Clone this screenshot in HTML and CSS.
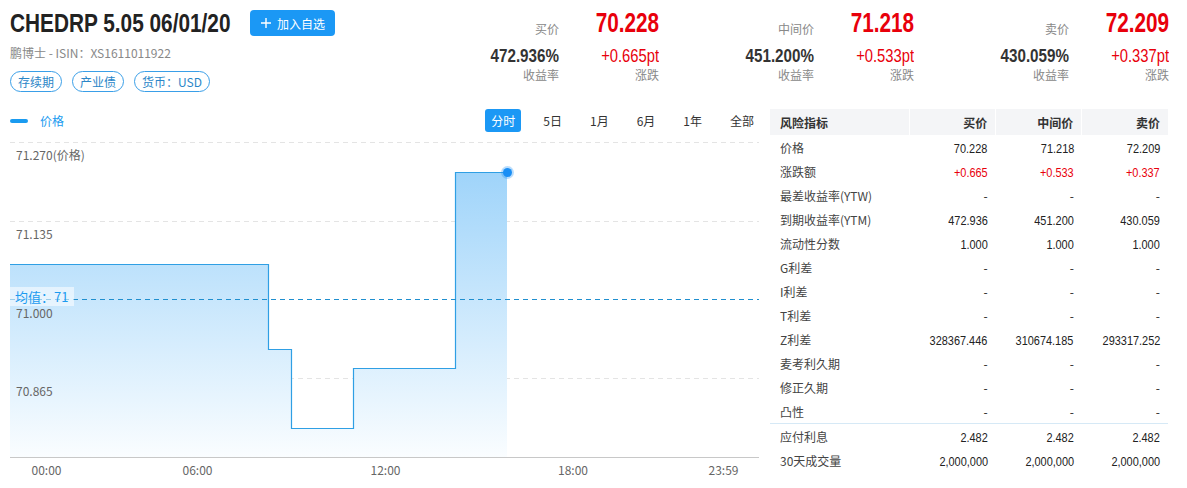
FILE: index.html
```html
<!DOCTYPE html>
<html lang="zh">
<head>
    <meta charset="UTF-8">
    <meta name="viewport" content="width=device-width, initial-scale=1.0">
    <title>CHEDRP 5.05 06/01/20</title>
    <link rel="stylesheet" href="styles.css">
</head>
<body>
    <header class="top">
        <div class="bond">
            <div class="bond-title">
                <h1>CHEDRP 5.05 06/01/20</h1>
                <button class="add-btn">
                    <svg width="12" height="12" viewBox="0 0 12 12"><path d="M6 1v10M1 6h10" stroke="#fff" stroke-width="1.4" fill="none"/></svg>
                    加入自选
                </button>
            </div>
            <div class="bond-sub">鹏博士 - ISIN：XS1611011922</div>
            <div class="tags">
                <span class="tag">存续期</span>
                <span class="tag">产业债</span>
                <span class="tag">货币：USD</span>
            </div>
        </div>
        <div class="quotes">
            <div class="quote">
                <span class="q-label">买价</span>
                <span class="q-price">70.228</span>
                <span class="q-yield">472.936%</span>
                <span class="q-chg">+0.665pt</span>
                <span class="q-cap">收益率</span>
                <span class="q-cap">涨跌</span>
            </div>
            <div class="quote">
                <span class="q-label">中间价</span>
                <span class="q-price">71.218</span>
                <span class="q-yield">451.200%</span>
                <span class="q-chg">+0.533pt</span>
                <span class="q-cap">收益率</span>
                <span class="q-cap">涨跌</span>
            </div>
            <div class="quote">
                <span class="q-label">卖价</span>
                <span class="q-price">72.209</span>
                <span class="q-yield">430.059%</span>
                <span class="q-chg">+0.337pt</span>
                <span class="q-cap">收益率</span>
                <span class="q-cap">涨跌</span>
            </div>
        </div>
    </header>

    <main class="content">
        <section class="chart">
            <div class="chart-bar">
                <div class="legend"><span class="legend-line"></span>价格</div>
                <div class="ranges">
                    <button class="range active">分时</button>
                    <button class="range">5日</button>
                    <button class="range">1月</button>
                    <button class="range">6月</button>
                    <button class="range">1年</button>
                    <button class="range">全部</button>
                </div>
            </div>
            <svg class="plot" width="770" height="350" viewBox="0 138 770 350">
                <defs>
                    <linearGradient id="area" x1="0" y1="172" x2="0" y2="457" gradientUnits="userSpaceOnUse">
                        <stop offset="0" stop-color="#9fd4fa"/>
                        <stop offset="1" stop-color="#fafdff"/>
                    </linearGradient>
                </defs>
                <g class="grid-lines">
                    <line x1="10" y1="142.5" x2="759" y2="142.5"/>
                    <line x1="10" y1="221.5" x2="759" y2="221.5"/>
                    <line x1="10" y1="378.5" x2="759" y2="378.5"/>
                </g>
                <line class="axis" x1="10" y1="457.5" x2="759" y2="457.5"/>
                <path class="area" d="M10 264 H268 V349 H291 V428 H353 V368 H455.5 V172 H507 V457 H10 Z"/>
                <path class="price-line" d="M10 264.5 H268.5 V349.5 H291.5 V428.5 H353.5 V368.5 H455.5 V172.5 H507"/>
                <line class="mean-line" x1="10" y1="299.5" x2="759" y2="299.5"/>
                <g class="y-labels">
                    <text x="16" y="160">71.270(价格)</text>
                    <text x="16" y="239">71.135</text>
                    <text x="16" y="318">71.000</text>
                    <text x="16" y="396">70.865</text>
                </g>
                <rect class="mean-box" x="10" y="287" width="64" height="19"/>
                <text class="mean-text" x="15" y="302">均值：71</text>
                <g class="x-labels">
                    <text x="46.5" y="475">00:00</text>
                    <text x="197.5" y="475">06:00</text>
                    <text x="385.5" y="475">12:00</text>
                    <text x="573" y="475">18:00</text>
                    <text x="723.5" y="475">23:59</text>
                </g>
                <circle cx="507.5" cy="172.5" r="6.5" fill="#1a8ff5" fill-opacity="0.3"/>
                <circle cx="507.5" cy="172.5" r="4.5" fill="#1a8ff5"/>
            </svg>
        </section>

        <section class="risk">
            <table class="risk-table">
                <thead>
                    <tr><th>风险指标</th><th>买价</th><th>中间价</th><th>卖价</th></tr>
                </thead>
                <tbody>
                    <tr><td>价格</td><td class="num"><span class="n">70.228</span></td><td class="num"><span class="n">71.218</span></td><td class="num"><span class="n">72.209</span></td></tr>
                    <tr><td>涨跌额</td><td class="num up"><span class="n">+0.665</span></td><td class="num up"><span class="n">+0.533</span></td><td class="num up"><span class="n">+0.337</span></td></tr>
                    <tr><td>最差收益率(YTW)</td><td class="num">-</td><td class="num">-</td><td class="num">-</td></tr>
                    <tr><td>到期收益率(YTM)</td><td class="num"><span class="n">472.936</span></td><td class="num"><span class="n">451.200</span></td><td class="num"><span class="n">430.059</span></td></tr>
                    <tr><td>流动性分数</td><td class="num"><span class="n">1.000</span></td><td class="num"><span class="n">1.000</span></td><td class="num"><span class="n">1.000</span></td></tr>
                    <tr><td>G利差</td><td class="num">-</td><td class="num">-</td><td class="num">-</td></tr>
                    <tr><td>I利差</td><td class="num">-</td><td class="num">-</td><td class="num">-</td></tr>
                    <tr><td>T利差</td><td class="num">-</td><td class="num">-</td><td class="num">-</td></tr>
                    <tr><td>Z利差</td><td class="num"><span class="n">328367.446</span></td><td class="num"><span class="n">310674.185</span></td><td class="num"><span class="n">293317.252</span></td></tr>
                    <tr><td>麦考利久期</td><td class="num">-</td><td class="num">-</td><td class="num">-</td></tr>
                    <tr><td>修正久期</td><td class="num">-</td><td class="num">-</td><td class="num">-</td></tr>
                    <tr><td>凸性</td><td class="num">-</td><td class="num">-</td><td class="num">-</td></tr>
                    <tr class="split"><td>应付利息</td><td class="num"><span class="n">2.482</span></td><td class="num"><span class="n">2.482</span></td><td class="num"><span class="n">2.482</span></td></tr>
                    <tr><td>30天成交量</td><td class="num"><span class="n">2,000,000</span></td><td class="num"><span class="n">2,000,000</span></td><td class="num"><span class="n">2,000,000</span></td></tr>
                </tbody>
            </table>
        </section>
    </main>
</body>
</html>
```

FILE: styles.css
```css
body {
    margin: 0;
    font-family: "Noto Sans CJK SC", "Noto Sans", sans-serif;
    font-size: 12px;
    color: #333;
    background-color: #fff;
}
.top {
    display: flex;
    height: 100px;
}
.bond {
    box-sizing: border-box;
    width: 404px;
    padding: 8px 0 0 10px;
}
.bond-title {
    display: flex;
    align-items: center;
}
/* narrow figures: Arial-width font squeezed to the condensed look */
h1 {
    width: 225px;
    margin: 0;
    font-family: "Liberation Sans", Arial, sans-serif;
    font-size: 26px;
    font-weight: bold;
    line-height: 30px;
    white-space: nowrap;
    color: #222;
    transform: scaleX(0.8);
    transform-origin: left center;
}
.add-btn {
    display: flex;
    align-items: center;
    gap: 5px;
    height: 26px;
    margin-left: 15px;
    padding: 0 10px;
    border: none;
    border-radius: 4px;
    background-color: #1b98f5;
    color: #fff;
    font-family: inherit;
    font-size: 12px;
}
.bond-sub {
    margin-top: 7px;
    line-height: 16px;
    color: #888;
}
.tags {
    display: flex;
    gap: 10px;
    margin-top: 10px;
}
.tag {
    box-sizing: border-box;
    height: 21px;
    padding: 0 7px;
    border: 1px solid #3a9fe8;
    border-radius: 11px;
    line-height: 19px;
    color: #2a86c8;
}
.quotes {
    display: flex;
    padding-top: 5px;
}
.quote {
    display: grid;
    grid-template-columns: 155px 100px;
    grid-template-rows: 36px 27px 18px;
    text-align: right;
}
.q-label, .q-cap {
    color: #888;
    font-size: 12px;
}
.q-label {
    align-self: end;
    line-height: 16px;
    padding-bottom: 4px;
}
.q-cap {
    line-height: 14px;
}
.q-price, .q-yield, .q-chg {
    font-family: "Liberation Sans", Arial, sans-serif;
    white-space: nowrap;
    transform-origin: right center;
}
.q-price {
    font-size: 28px;
    font-weight: bold;
    line-height: 36px;
    color: #e8000b;
    transform: scaleX(0.74);
}
.q-yield, .q-chg {
    line-height: 24px;
    padding-top: 3px;
}
.q-yield {
    font-size: 19px;
    font-weight: bold;
    color: #333;
    transform: scaleX(0.8);
}
.q-chg {
    font-size: 18px;
    color: #e8000b;
    transform: scaleX(0.82);
}

.content {
    display: flex;
}
.chart {
    width: 770px;
}
.chart-bar {
    display: flex;
    align-items: center;
    height: 23px;
    margin: 9px 0 6px;
    padding-right: 10px;
}
.legend {
    display: flex;
    align-items: center;
    color: #1a9bf0;
}
.legend-line {
    width: 18px;
    height: 4px;
    margin: 0 12px 0 10px;
    border-radius: 2px;
    background-color: #1a9bf0;
}
.ranges {
    display: flex;
    gap: 16px;
    margin-left: auto;
}
.range {
    height: 23px;
    padding: 0 6px;
    border: none;
    border-radius: 3px;
    background: none;
    font-family: inherit;
    font-size: 12px;
    color: #333;
}
.range.active {
    background-color: #1b98f5;
    color: #fff;
}
.plot {
    display: block;
    font-family: "Noto Sans CJK SC", "Noto Sans", sans-serif;
    font-size: 12px;
}
.grid-lines line {
    stroke: #e4e4e4;
    stroke-dasharray: 5 4;
}
.axis {
    stroke: #c8c8c8;
}
.area {
    fill: url(#area);
}
.price-line {
    fill: none;
    stroke: #2f9fe4;
    stroke-width: 1.2;
}
.mean-line {
    stroke: #1f8fcf;
    stroke-dasharray: 5 4;
}
.y-labels text, .x-labels text {
    fill: #666;
}
.x-labels text {
    text-anchor: middle;
}
.mean-box {
    fill: #fff;
    fill-opacity: 0.55;
}
.mean-text {
    fill: #1a9bf0;
    font-size: 13px;
}

.risk {
    padding-top: 9px;
}
.risk-table {
    width: 398px;
    border-collapse: collapse;
}
.risk-table th {
    height: 26px;
    padding: 0 8px;
    border-right: 1px solid #fff;
    background-color: #f4f5f7;
    font-weight: bold;
    text-align: right;
}
.risk-table th:first-child {
    width: 121px;
    padding-left: 10px;
    text-align: left;
}
.risk-table th:last-child {
    border-right: none;
}
.risk-table td {
    height: 24px;
    padding: 0 8px 0 10px;
    color: #444;
}
.risk-table td.num {
    padding-left: 0;
    text-align: right;
    color: #222;
}
.risk-table td.up {
    color: #e8000b;
}
.n {
    display: inline-block;
    font-family: "Liberation Sans", Arial, sans-serif;
    font-size: 13.5px;
    white-space: nowrap;
    transform: scaleX(0.81);
    transform-origin: right center;
}
.risk-table tr.split td {
    border-top: 1px solid #d6e9f6;
}
```
